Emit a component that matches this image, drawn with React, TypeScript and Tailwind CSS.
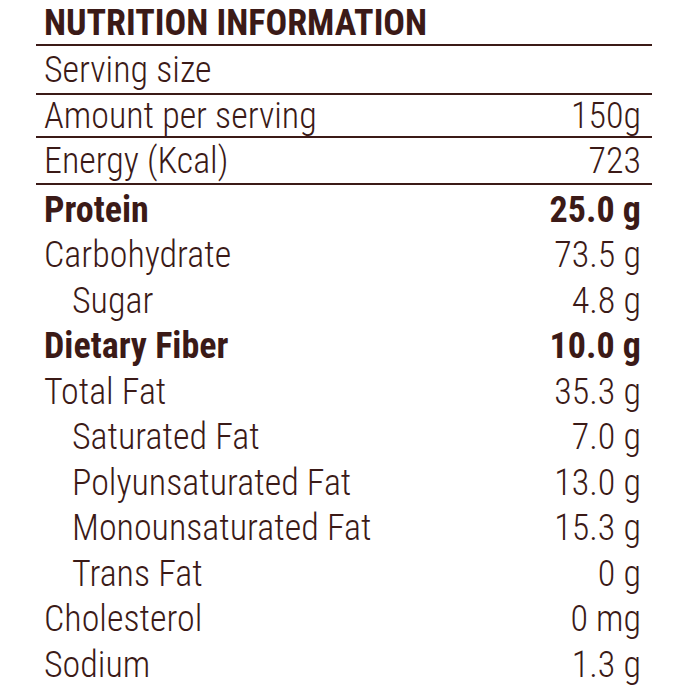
type Row = {
  label: string;
  value: string;
  bold?: boolean;
  indent?: boolean;
};

const rows: Row[] = [
  { label: "Protein", value: "25.0 g", bold: true },
  { label: "Carbohydrate", value: "73.5 g" },
  { label: "Sugar", value: "4.8 g", indent: true },
  { label: "Dietary Fiber", value: "10.0 g", bold: true },
  { label: "Total Fat", value: "35.3 g" },
  { label: "Saturated Fat", value: "7.0 g", indent: true },
  { label: "Polyunsaturated Fat", value: "13.0 g", indent: true },
  { label: "Monounsaturated Fat", value: "15.3 g", indent: true },
  { label: "Trans Fat", value: "0 g", indent: true },
  { label: "Cholesterol", value: "0 mg" },
  { label: "Sodium", value: "1.3 g" },
];

export default function App() {
  return (
    <div className="min-h-[700px] w-[690px] bg-white font-['Roboto_Condensed','Liberation_Sans',sans-serif] text-[#3b1a17]">
      <div className="ml-[36px] w-[616px]">
        <div className="h-[46px] border-b-2 border-[#3b1a17] pl-2 text-[36px] font-bold leading-[46px]">
          NUTRITION INFORMATION
        </div>
        <div className="flex h-[49px] justify-between border-b-2 border-[#3b1a17] pl-2 pr-[11px] text-[36px] font-light leading-[49px]">
          <span>Serving size</span>
        </div>
        <div className="flex h-[43px] justify-between border-b-2 border-[#3b1a17] pl-2 pr-[11px] text-[36px] font-light leading-[42px]">
          <span>Amount per serving</span>
          <span>150g</span>
        </div>
        <div className="flex h-[47px] justify-between border-b-2 border-[#3b1a17] pl-2 pr-[11px] text-[36px] font-light leading-[47px]">
          <span>Energy (Kcal)</span>
          <span>723</span>
        </div>
        <div className="flex flex-col pt-[2.5px]">
          {rows.map((r) => (
            <div
              key={r.label}
              className={
                "flex h-[45.5px] justify-between pr-[11px] text-[36px] leading-[45.5px] " +
                (r.indent ? "pl-[36px] " : "pl-2 ") +
                (r.bold ? "font-bold" : "font-light")
              }
            >
              <span>{r.label}</span>
              <span>{r.value}</span>
            </div>
          ))}
        </div>
      </div>
    </div>
  );
}
